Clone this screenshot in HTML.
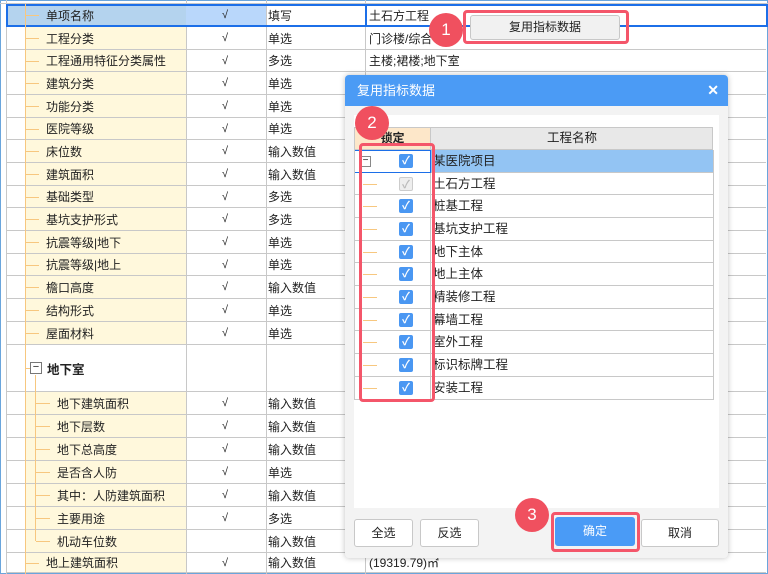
<!DOCTYPE html><html><head><meta charset="utf-8"><style>
*{margin:0;padding:0;box-sizing:border-box}
body{width:768px;height:574px;overflow:hidden;background:#fff;font-family:"Liberation Sans","Noto Sans CJK SC",sans-serif;font-size:12px;color:#222;position:relative}
.a{position:absolute}
.row{position:absolute;left:6px;width:760px;height:23px;border-bottom:1px solid #c8c8c8}
.row .n{position:absolute;left:19px;width:161px;top:0;bottom:0;background:#fff8dc}
.row .t,.row .ck,.row .ty,.row .v{position:absolute;top:0;bottom:0;display:flex;align-items:center;white-space:nowrap}
.row .ck{left:216px;font-style:italic;font-size:11px}
.row .ty{left:262px}
.row .v{left:363px}
.hl{position:absolute;height:1px;background:#f7c77f;width:14px;top:50%}
.vl{position:absolute;width:1px;background:#c8c8c8;top:0;height:574px}
.dr{position:absolute;left:354px;width:359px;height:23px;border-bottom:1px solid #c8c8c8;background:#fff}
.dr .cb{position:absolute;left:45px;top:4px;width:14px;height:14px;background:#4a97f2;border-radius:2px;color:#fff;font-size:11px;line-height:14px;text-align:center;font-weight:bold}
.dr .tx{position:absolute;left:79px;top:0;line-height:22px;font-size:12.5px}
.dr .ln{position:absolute;left:9px;top:11px;width:14px;height:1px;background:#f7c77f}
.dr .sep{position:absolute;left:76px;top:0;width:1px;height:23px;background:#c8c8c8}
.circ{position:absolute;width:34px;height:34px;border-radius:50%;background:#f0505f;color:#fff;font-size:17px;text-align:center;line-height:34px;font-family:"Liberation Sans",sans-serif}
.red{position:absolute;border:3px solid #f4566a;border-radius:4px}
.btn{position:absolute;height:28px;border:1px solid #c8c8c8;border-radius:3px;background:#fff;text-align:center;line-height:26px;font-size:12px}
</style></head><body>
<div class="a" style="left:0;top:0;width:768px;height:574px;border:1px solid #6aa5dc"></div>
<div class="vl" style="left:6px"></div>
<div class="vl" style="left:186px"></div>
<div class="vl" style="left:266px"></div>
<div class="vl" style="left:365px"></div>
<div class="a" style="left:0;top:3px;width:768px;height:1px;background:#c8c8c8"></div>

<div class="row" style="top:4px"><div class="n" style="background:#b4d3ee;left:0;width:180px"></div><div class="a" style="left:180px;top:0;width:80px;height:22px;background:#b9d7fb"></div><div class="hl" style="left:19px"></div><span class="t" style="left:40px">单项名称</span><span class="ck">√</span><span class="ty">填写</span><span class="v">土石方工程</span></div>
<div class="a" style="left:6px;top:4px;width:762px;height:23px;border:2px solid #1c6fe8"></div>
<div class="a" style="left:365px;top:4px;width:2px;height:23px;background:#1c6fe8"></div>

<div class="row" style="top:27px;height:23px"><div class="n"></div><div class="hl" style="left:19px"></div><span class="t" style="left:40px">工程分类</span><span class="ck">√</span><span class="ty">单选</span><span class="v">门诊楼/综合</span></div>
<div class="row" style="top:50px;height:22px"><div class="n"></div><div class="hl" style="left:19px"></div><span class="t" style="left:40px">工程通用特征分类属性</span><span class="ck">√</span><span class="ty">多选</span><span class="v">主楼;裙楼;地下室</span></div>
<div class="row" style="top:72px;height:23px"><div class="n"></div><div class="hl" style="left:19px"></div><span class="t" style="left:40px">建筑分类</span><span class="ck">√</span><span class="ty">单选</span></div>
<div class="row" style="top:95px;height:23px"><div class="n"></div><div class="hl" style="left:19px"></div><span class="t" style="left:40px">功能分类</span><span class="ck">√</span><span class="ty">单选</span></div>
<div class="row" style="top:118px;height:22px"><div class="n"></div><div class="hl" style="left:19px"></div><span class="t" style="left:40px">医院等级</span><span class="ck">√</span><span class="ty">单选</span></div>
<div class="row" style="top:140px;height:23px"><div class="n"></div><div class="hl" style="left:19px"></div><span class="t" style="left:40px">床位数</span><span class="ck">√</span><span class="ty">输入数值</span></div>
<div class="row" style="top:163px;height:23px"><div class="n"></div><div class="hl" style="left:19px"></div><span class="t" style="left:40px">建筑面积</span><span class="ck">√</span><span class="ty">输入数值</span></div>
<div class="row" style="top:186px;height:22px"><div class="n"></div><div class="hl" style="left:19px"></div><span class="t" style="left:40px">基础类型</span><span class="ck">√</span><span class="ty">多选</span></div>
<div class="row" style="top:208px;height:23px"><div class="n"></div><div class="hl" style="left:19px"></div><span class="t" style="left:40px">基坑支护形式</span><span class="ck">√</span><span class="ty">多选</span></div>
<div class="row" style="top:231px;height:23px"><div class="n"></div><div class="hl" style="left:19px"></div><span class="t" style="left:40px">抗震等级|地下</span><span class="ck">√</span><span class="ty">单选</span></div>
<div class="row" style="top:254px;height:22px"><div class="n"></div><div class="hl" style="left:19px"></div><span class="t" style="left:40px">抗震等级|地上</span><span class="ck">√</span><span class="ty">单选</span></div>
<div class="row" style="top:276px;height:23px"><div class="n"></div><div class="hl" style="left:19px"></div><span class="t" style="left:40px">檐口高度</span><span class="ck">√</span><span class="ty">输入数值</span></div>
<div class="row" style="top:299px;height:23px"><div class="n"></div><div class="hl" style="left:19px"></div><span class="t" style="left:40px">结构形式</span><span class="ck">√</span><span class="ty">单选</span></div>
<div class="row" style="top:322px;height:23px"><div class="n"></div><div class="hl" style="left:19px"></div><span class="t" style="left:40px">屋面材料</span><span class="ck">√</span><span class="ty">单选</span></div>
<div class="row" style="top:345px;height:47px"><div class="hl" style="left:19px;width:8px"></div><div class="a" style="left:24px;top:17px;width:12px;height:12px;border:1px solid #777;background:#fff;font-size:11px;line-height:9px;text-align:center">−</div><span class="t" style="left:41px;font-weight:bold;font-size:12.5px">地下室</span></div>
<div class="row" style="top:392px"><div class="n"></div><div class="hl" style="left:30px"></div><span class="t" style="left:51px">地下建筑面积</span><span class="ck">√</span><span class="ty">输入数值</span></div>
<div class="row" style="top:415px"><div class="n"></div><div class="hl" style="left:30px"></div><span class="t" style="left:51px">地下层数</span><span class="ck">√</span><span class="ty">输入数值</span></div>
<div class="row" style="top:438px"><div class="n"></div><div class="hl" style="left:30px"></div><span class="t" style="left:51px">地下总高度</span><span class="ck">√</span><span class="ty">输入数值</span></div>
<div class="row" style="top:461px"><div class="n"></div><div class="hl" style="left:30px"></div><span class="t" style="left:51px">是否含人防</span><span class="ck">√</span><span class="ty">单选</span></div>
<div class="row" style="top:484px"><div class="n"></div><div class="hl" style="left:30px"></div><span class="t" style="left:51px">其中：人防建筑面积</span><span class="ck">√</span><span class="ty">输入数值</span></div>
<div class="row" style="top:507px"><div class="n"></div><div class="hl" style="left:30px"></div><span class="t" style="left:51px">主要用途</span><span class="ck">√</span><span class="ty">多选</span></div>
<div class="row" style="top:530px"><div class="n"></div><div class="hl" style="left:30px"></div><span class="t" style="left:51px">机动车位数</span><span class="ty">输入数值</span></div>
<div class="row" style="top:553px;height:20px"><div class="n"></div><div class="hl" style="left:19px"></div><span class="t" style="left:40px">地上建筑面积</span><span class="ck">√</span><span class="ty">输入数值</span><span class="v">(19319.79)㎡</span></div>
<div class="a" style="left:25px;top:4px;width:1px;height:570px;background:#f7c77f"></div>
<div class="a" style="left:35px;top:375px;width:1px;height:166px;background:#f7c77f"></div>

<div class="red" style="left:463px;top:10px;width:166px;height:34px"></div>
<div class="btn" style="left:470px;top:15px;width:150px;height:25px;background:#f1f1f1;line-height:23px">复用指标数据</div>
<div class="circ" style="left:429px;top:13px">1</div>

<div class="a" style="left:345px;top:75px;width:383px;height:483px;background:#f3f3f3;border-radius:4px;box-shadow:0 0 6px rgba(0,0,0,.25)"></div>
<div class="a" style="left:345px;top:75px;width:383px;height:31px;background:#4b9bf5;border-radius:4px 4px 0 0;color:#fff;font-size:13px;line-height:31px;padding-left:12px">复用指标数据<span style="position:absolute;right:9px;font-weight:bold;font-size:14px">✕</span></div>
<div class="a" style="left:354px;top:115px;width:365px;height:393px;background:#fff"></div>
<div class="a" style="left:354px;top:127px;width:359px;height:23px;border:1px solid #c8c8c8;background:#e8e8e8"></div>
<div class="a" style="left:354px;top:127px;width:77px;height:23px;background:#fde7c9;border:1px solid #c8c8c8;text-align:center;line-height:21px;font-weight:bold">锁定</div>
<div class="a" style="left:431px;top:127px;width:282px;height:23px;text-align:center;line-height:23px;font-size:12.5px">工程名称</div>
<div class="dr" style="top:150px;background:#93c4f3"><div class="a" style="left:0;top:0;width:77px;height:23px;background:#fff;border:1px solid #1c6fe8"></div><div class="a" style="left:6px;top:6px;width:11px;height:11px;border:1px solid #888;font-size:10px;line-height:8px;text-align:center">−</div><div class="cb">✓</div><span class="tx">某医院项目</span></div>
<div class="dr" style="top:173px;height:22px"><div class="ln"></div><div class="sep"></div><div class="cb" style="background:#eee;border:1px solid #ccc;color:#bbb">✓</div><span class="tx">土石方工程</span></div>
<div class="dr" style="top:195px"><div class="ln"></div><div class="sep"></div><div class="cb">✓</div><span class="tx">桩基工程</span></div>
<div class="dr" style="top:218px"><div class="ln"></div><div class="sep"></div><div class="cb">✓</div><span class="tx">基坑支护工程</span></div>
<div class="dr" style="top:241px;height:22px"><div class="ln"></div><div class="sep"></div><div class="cb">✓</div><span class="tx">地下主体</span></div>
<div class="dr" style="top:263px"><div class="ln"></div><div class="sep"></div><div class="cb">✓</div><span class="tx">地上主体</span></div>
<div class="dr" style="top:286px"><div class="ln"></div><div class="sep"></div><div class="cb">✓</div><span class="tx">精装修工程</span></div>
<div class="dr" style="top:309px;height:22px"><div class="ln"></div><div class="sep"></div><div class="cb">✓</div><span class="tx">幕墙工程</span></div>
<div class="dr" style="top:331px"><div class="ln"></div><div class="sep"></div><div class="cb">✓</div><span class="tx">室外工程</span></div>
<div class="dr" style="top:354px"><div class="ln"></div><div class="sep"></div><div class="cb">✓</div><span class="tx">标识标牌工程</span></div>
<div class="dr" style="top:377px"><div class="ln"></div><div class="sep"></div><div class="cb">✓</div><span class="tx">安装工程</span></div>
<div class="a" style="left:354px;top:150px;width:1px;height:250px;background:#c8c8c8"></div>
<div class="a" style="left:713px;top:150px;width:1px;height:250px;background:#c8c8c8"></div>
<div class="red" style="left:359px;top:143px;width:76px;height:259px"></div>
<div class="circ" style="left:355px;top:106px">2</div>

<div class="btn" style="left:354px;top:519px;width:59px">全选</div>
<div class="btn" style="left:420px;top:519px;width:59px">反选</div>
<div class="red" style="left:551px;top:512px;width:89px;height:40px"></div>
<div class="btn" style="left:555px;top:517px;width:80px;height:29px;background:#4a9bf6;border-color:#4a9bf6;color:#fff">确定</div>
<div class="btn" style="left:641px;top:519px;width:78px">取消</div>
<div class="circ" style="left:515px;top:498px">3</div>
</body></html>
